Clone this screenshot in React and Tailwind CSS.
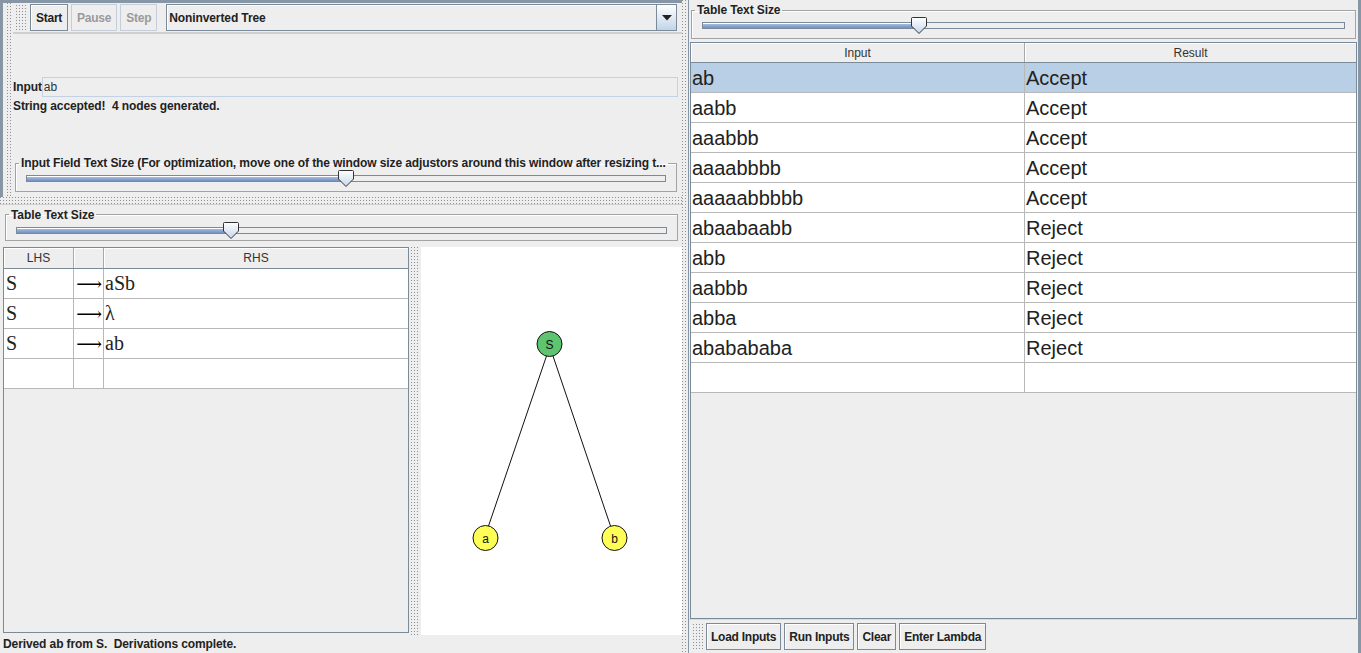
import React from 'react';

const DOTS = 'bg-[conic-gradient(at_1px_1px,transparent_75%,#8f8f8f_0)] bg-[length:3px_3px]';

const PRODUCTIONS = [
  { lhs: 'S', rhs: 'aSb' },
  { lhs: 'S', rhs: 'λ' },
  { lhs: 'S', rhs: 'ab' },
];

const RESULTS = [
  ['ab', 'Accept'],
  ['aabb', 'Accept'],
  ['aaabbb', 'Accept'],
  ['aaaabbbb', 'Accept'],
  ['aaaaabbbbb', 'Accept'],
  ['abaabaabb', 'Reject'],
  ['abb', 'Reject'],
  ['aabbb', 'Reject'],
  ['abba', 'Reject'],
  ['ababababa', 'Reject'],
];

function MetalButton({ children, disabled, tight }) {
  return (
    <div
      className={`h-[27px] shrink-0 flex items-center ${tight ? 'px-[4px]' : 'px-[5px]'} text-[12px] font-bold tracking-[-0.25px] border ${
        disabled
          ? 'border-[#c6cfd9] text-[#9a9a9a]'
          : 'border-[#7a8a99] text-[#222] shadow-[inset_1px_1px_0_#fff]'
      } bg-[#eeeeee]`}
    >
      {children}
    </div>
  );
}

function Slider({ fill }) {
  // fill = thumb centre offset from track start, px
  return (
    <div className="relative h-[17px] flex items-center">
      <div className="flex-1 h-[7px] border border-[#7a8a99] flex bg-[#eeeeee]">
        <div
          className="h-full bg-[linear-gradient(#ffffff_0,#ffffff_1px,#a8bcd8_1px,#6f8fc4_100%)]"
          style={{ width: fill }}
        />
      </div>
      <svg
        className="absolute top-0"
        style={{ left: fill - 8 }}
        width="16"
        height="17"
        viewBox="0 0 16 17"
      >
        <defs>
          <linearGradient id={`th${fill}`} x1="0" y1="0" x2="0" y2="1">
            <stop offset="0" stopColor="#ffffff" />
            <stop offset="1" stopColor="#c6d6ea" />
          </linearGradient>
        </defs>
        <path d="M0.5 1.5 Q0.5 0.5 1.5 0.5 H14.5 Q15.5 0.5 15.5 1.5 V9 L8 16.5 L0.5 9 Z" fill={`url(#th${fill})`} stroke="#333" />
      </svg>
    </div>
  );
}

function TitledSlider({ title, fill, className }) {
  return (
    <fieldset className={`min-w-0 border border-[#a3a3a3] shadow-[inset_1px_1px_0_#fff] ${className}`}>
      <legend className="ml-[3px] px-[2px] text-[12px] font-bold tracking-[-0.1px] text-[#222] leading-[14px] whitespace-nowrap">
        {title}
      </legend>
      <div className="px-[10px] pb-[3px]">
        <Slider fill={fill} />
      </div>
    </fieldset>
  );
}

function TreeView() {
  return (
    <svg width="260" height="388" className="block">
      <g transform="translate(-420 -247)" fontFamily="'Liberation Sans', Arial, sans-serif" fontSize="12">
        <line x1="545.5" y1="356" x2="487.5" y2="526" stroke="#111" />
        <line x1="552" y1="356" x2="609.5" y2="526" stroke="#111" />
        <circle cx="548.5" cy="344" r="12.5" fill="#5fc46f" stroke="#111" />
        <text x="548.5" y="348.5" textAnchor="middle" fill="#111">S</text>
        <circle cx="484.5" cy="538" r="12.5" fill="#ffff55" stroke="#111" />
        <text x="484.5" y="542.5" textAnchor="middle" fill="#111">a</text>
        <circle cx="613.5" cy="538" r="12.5" fill="#ffff55" stroke="#111" />
        <text x="613.5" y="542.5" textAnchor="middle" fill="#111">b</text>
      </g>
    </svg>
  );
}

function GrammarTable() {
  const rows = [...PRODUCTIONS, { lhs: '', rhs: '', empty: true }];
  return (
    <div className="w-[406px] shrink-0 h-[386px] border border-[#7a8a99] flex flex-col bg-[#eeeeee]">
      <div className="flex h-[21px] border-b border-[#7a8a99] text-[12px] text-[#333]">
        <div className="w-[70px] flex items-center justify-center border-r border-[#a8a8a8] shadow-[inset_1px_1px_0_#fff]">LHS</div>
        <div className="w-[30px] border-r border-[#a8a8a8] shadow-[inset_1px_1px_0_#fff]" />
        <div className="flex-1 flex items-center justify-center shadow-[inset_1px_1px_0_#fff]">RHS</div>
      </div>
      {rows.map((r, i) => (
        <div
          key={i}
          className="flex h-[30px] bg-white border-b border-[#b8b8b8] font-['Liberation_Serif','Times_New_Roman',serif] text-[20px] text-[#222]"
        >
          <div className="w-[70px] border-r border-[#b8b8b8] flex items-center pl-[2px]">{r.lhs}</div>
          <div className="w-[30px] border-r border-[#b8b8b8] flex items-center justify-end pr-[1px] text-black font-['DejaVu_Serif',serif] font-extralight text-[18px]">
            {r.empty ? '' : '⟶'}
          </div>
          <div className="flex-1 flex items-center pl-[1px]">{r.rhs}</div>
        </div>
      ))}
    </div>
  );
}

function ResultTable() {
  const rows = [...RESULTS, ['', '']];
  return (
    <div className="flex-1 mx-[1px] border border-[#7a8a99] flex flex-col bg-[#eeeeee]">
      <div className="flex h-[20px] border-b border-[#7a8a99] text-[12px] text-[#333]">
        <div className="w-[334px] flex items-center justify-center border-r border-[#a8a8a8] shadow-[inset_1px_1px_0_#fff]">Input</div>
        <div className="flex-1 flex items-center justify-center shadow-[inset_1px_1px_0_#fff]">Result</div>
      </div>
      {rows.map(([a, b], i) => (
        <div
          key={i}
          className={`flex h-[30px] border-b border-[#b8b8b8] text-[20px] text-[#222] ${i === 0 ? 'bg-[#b8cfe5]' : 'bg-white'}`}
        >
          <div className="w-[334px] border-r border-[#b8b8b8] flex items-center pl-[1px]">{a}</div>
          <div className="flex-1 flex items-center pl-[1px]">{b}</div>
        </div>
      ))}
    </div>
  );
}

export default function App() {
  return (
    <div className="w-[1361px] h-[653px] bg-[#eeeeee] flex overflow-hidden font-['Liberation_Sans',Arial,sans-serif] text-[#222]">
      {/* left side */}
      <div className="w-[682px] shrink-0 flex flex-col">
        <div className="h-[197px] flex border-t-[3px] border-l-[3px] border-[#8796a5]">
          <div className="w-[4px] shrink-0" />
          <div className={`w-[6px] shrink-0 ${DOTS}`} />
          <div className="flex-1 min-w-0 flex flex-col">
            <div className="h-[31px] flex items-center border-b-2 border-[#cfcfcf]">
              <div className={`w-[10px] h-[26px] shrink-0 ml-[3px] mr-[4px] ${DOTS}`} />
              <div className="flex gap-[3px]">
                <MetalButton>Start</MetalButton>
                <MetalButton disabled>Pause</MetalButton>
                <MetalButton disabled>Step</MetalButton>
              </div>
              <div className="ml-[9px] flex-1 mr-[5px] h-[27px] flex border border-[#7a8a99] bg-[#eeeeee] shadow-[inset_1px_1px_0_#fff]">
                <div className="flex-1 flex items-center pl-[2px] text-[12px] font-bold tracking-[-0.1px] text-[#222]">Noninverted Tree</div>
                <div className="w-[20px] border-l border-[#7a8a99] bg-[linear-gradient(#ffffff,#c3d4e8)] flex items-center justify-center">
                  <svg width="10" height="6" viewBox="0 0 10 6">
                    <path d="M0 0 H10 L5 5.5 Z" fill="#222" />
                  </svg>
                </div>
              </div>
            </div>
            <div className="h-[43px]" />
            <div className="flex h-[20px] items-center pr-[4px]">
              <span className="text-[12px] font-bold tracking-[-0.1px]">Input</span>
              <div className="flex-1 h-[20px] border border-[#c2d2e4] flex items-center pl-[1px] text-[12px] text-[#333]">ab</div>
            </div>
            <div className="mt-[2px] text-[12px] font-bold tracking-[-0.1px] leading-[14px]">String accepted!&nbsp; 4 nodes generated.</div>
            <div className="h-[43px]" />
            <TitledSlider
              title="Input Field Text Size (For optimization, move one of the window size adjustors around this window after resizing t..."
              fill={320}
              className="ml-[2px] mr-[5px] h-[36px]"
            />
          </div>
        </div>
        <div className={`h-[7px] shrink-0 ${DOTS}`} />
        <div className="h-[42px] border-t border-[#cfcfcf] flex flex-col pl-[5px] pr-[4px] pt-[3px]">
          <TitledSlider title="Table Text Size" fill={215} className="h-[33px]" />
        </div>
        <div className="h-[390px] flex pl-[3px] pt-[1px]">
          <GrammarTable />
          <div className={`w-[8px] shrink-0 mx-[2px] ${DOTS}`} />
          <div className="flex-1 bg-white">
            <TreeView />
          </div>
        </div>
        <div className="flex-1 flex items-center pl-[3px] text-[12px] font-bold tracking-[-0.1px]">
          Derived ab from S.&nbsp; Derivations complete.
        </div>
      </div>

      {/* divider */}
      <div className={`w-[6px] shrink-0 ${DOTS}`} />

      {/* right side */}
      <div className="flex-1 min-w-0 flex flex-col border-l border-[#8796a5] border-r-[3px] border-r-[#8796a5]">
        <div className="pt-[3px] px-[2px]">
          <TitledSlider title="Table Text Size" fill={217} className="h-[36px]" />
        </div>
        <div className="h-[3px]" />
        <ResultTable />
        <div className="h-[34px] flex items-center border-t border-[#dadada]">
          <div className={`w-[10px] h-[26px] shrink-0 ml-[4px] mr-[3px] ${DOTS}`} />
          <div className="flex gap-[3px]">
            <MetalButton tight>Load Inputs</MetalButton>
            <MetalButton tight>Run Inputs</MetalButton>
            <MetalButton tight>Clear</MetalButton>
            <MetalButton tight>Enter Lambda</MetalButton>
          </div>
        </div>
      </div>
    </div>
  );
}
